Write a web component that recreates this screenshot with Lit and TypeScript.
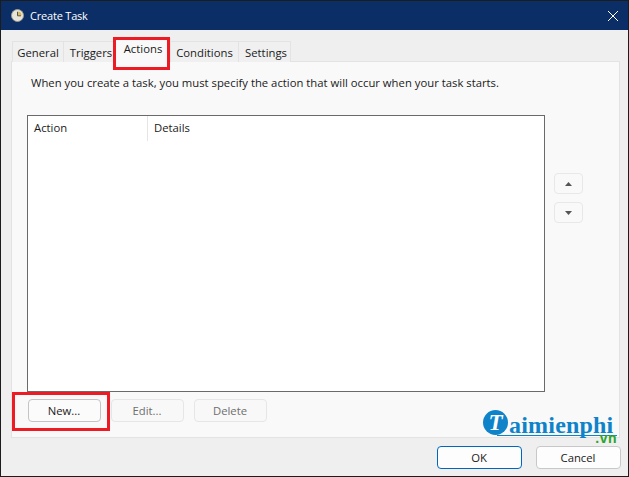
import { LitElement, html, css } from "lit";
import { customElement } from "lit/decorators.js";

@customElement("app-root")
export class AppRoot extends LitElement {
  static styles = css`
    :host { display: block; width: 629px; height: 477px; font-family: "Open Sans", "Noto Sans", sans-serif; font-size: 11.3px; color: #1a1a1a; }
    * { box-sizing: border-box; }
    .win { position: relative; width: 629px; height: 477px; background: #efefef; border: 1px solid #1c1c1c; display: flex; flex-direction: column; overflow: hidden; }
    .title { height: 29px; flex: none; background: #0b2e66; color: #fff; display: flex; align-items: center; padding: 0 9px 0 10px; gap: 6px; font-size: 11px; letter-spacing: -0.2px; }
    .title .t { flex: 1; }
    .title svg { display: block; }
    .body { flex: 1; display: flex; flex-direction: column; padding: 11px 7px 0 10px; }
    .tabs { display: flex; height: 20px; padding-left: 1px; flex: none; position: relative; z-index: 1; }
    .tab { height: 21px; border: 1px solid #e3e3e3; border-bottom: none; margin-right: -1px; background: #f0f0f0; display: flex; align-items: center; justify-content: center; flex: none; }
    .t1 { width: 52px; }
    .t2 { width: 53px; padding-left: 3px; }
    .t3 { width: 56px; height: 24px; margin-top: -3px; background: #f9f9f9; padding-bottom: 4px; position: relative; z-index: 2; }
    .t4 { width: 69px; }
    .t5 { width: 53px; padding-left: 3px; }
    .panel { height: 377px; flex: none; width: 609px; background: #f9f9f9; border: 1px solid #e3e3e3; display: flex; flex-direction: column; padding: 13px 0 0 15px; }
    .desc { height: 17px; padding-left: 4px; line-height: 16px; white-space: nowrap; }
    .mid { display: flex; margin-top: 23px; height: 277px; flex: none; }
    .list { width: 518px; height: 277px; background: #fff; border: 1px solid #6a6a6a; flex: none; }
    .head { display: flex; height: 25px; }
    .col { display: flex; align-items: center; padding: 0 0 2px 6px; border-right: 1px solid #e5e5e5; }
    .col.a { width: 120px; }
    .col.b { border: none; }
    .move { display: flex; flex-direction: column; gap: 8px; margin-left: 9px; padding-top: 58px; }
    .mv { width: 29px; height: 21px; border: 1px solid #e8e8e8; border-radius: 4px; background: #f9f9f9; display: flex; align-items: center; justify-content: center; }
    .acts { display: flex; gap: 10px; margin-top: 7px; padding-left: 1px; }
    .btn { width: 73px; height: 23px; border: 1px solid #e6e6e6; border-radius: 4px; background: #f8f8f8; color: #6e6e6e; display: flex; align-items: center; justify-content: center; padding-right: 1px; }
    .btn.en { background: #fbfbfb; color: #1a1a1a; border-color: #c4c4c4; }
    .foot { display: flex; justify-content: flex-end; gap: 14px; margin-top: 8px; }
    .foot .btn { width: 85px; color: #1a1a1a; background: #fdfdfd; }
    .foot .btn.def { border-color: #0067c0; }
    .foot .btn.can { border-color: #c8c8c8; }
    .hl { position: absolute; z-index: 5; border: 3px solid #ed1c24; pointer-events: none; }
    .hl.one { left: 112px; top: 36px; width: 57px; height: 33px; }
    .hl.two { left: 11px; top: 391px; width: 98px; height: 39px; }
    .mark { position: absolute; z-index: 6; left: 482px; top: 409px; width: 136px; height: 54px; pointer-events: none; }
    .dot { position: absolute; left: 0; top: 0; width: 25px; height: 25px; border-radius: 50%; background: #0f83c9; color: #fff; display: flex; align-items: center; justify-content: center; font: italic bold 23px "Liberation Serif", serif; }
    .word { position: absolute; left: 26px; top: 8px; font: bold 24px/14px "Liberation Serif", serif; color: #0f83c9; letter-spacing: 0.2px; white-space: nowrap; }
    .rule { position: absolute; left: 14px; top: 25px; width: 120px; height: 1px; background: #0f83c9; }
    .vn { position: absolute; right: 2px; top: 23px; font: bold 14px/10px "Liberation Sans", sans-serif; color: #2aa52a; letter-spacing: 0.5px; }
  `;

  render() {
    return html`
      <div class="win">
        <div class="title">
          <svg width="13" height="13" viewBox="0 0 13 13">
            <circle cx="6.5" cy="6.5" r="6" fill="#e8e4d8" stroke="#9a9a90" stroke-width="1"/>
            <path d="M6.5 6.5V2.4A4.1 4.1 0 0 1 10.6 6.5Z" fill="#d9b95e"/>
            <path d="M6.5 2.8V6.8H10" fill="none" stroke="#55554f" stroke-width="1"/>
          </svg>
          <span class="t">Create Task</span>
          <svg width="12" height="12" viewBox="0 0 12 12">
            <path d="M1 1L11 11M11 1L1 11" stroke="#fff" stroke-width="1" fill="none"/>
          </svg>
        </div>
        <div class="body">
          <div class="tabs">
            <div class="tab t1">General</div>
            <div class="tab t2">Triggers</div>
            <div class="tab t3">Actions</div>
            <div class="tab t4">Conditions</div>
            <div class="tab t5">Settings</div>
          </div>
          <div class="panel">
            <div class="desc">When you create a task, you must specify the action that will occur when your task starts.</div>
            <div class="mid">
              <div class="list">
                <div class="head">
                  <div class="col a">Action</div>
                  <div class="col b">Details</div>
                </div>
              </div>
              <div class="move">
                <div class="mv"><svg width="7" height="4" viewBox="0 0 7 4"><path d="M3.5 0L7 4H0Z" fill="#555"/></svg></div>
                <div class="mv"><svg width="7" height="4" viewBox="0 0 7 4"><path d="M0 0H7L3.5 4Z" fill="#555"/></svg></div>
              </div>
            </div>
            <div class="acts">
              <div class="btn en">New...</div>
              <div class="btn">Edit...</div>
              <div class="btn">Delete</div>
            </div>
          </div>
          <div class="foot">
            <div class="btn def">OK</div>
            <div class="btn can">Cancel</div>
          </div>
        </div>
        <div class="hl one"></div>
        <div class="hl two"></div>
        <div class="mark">
          <div class="dot">T</div>
          <div class="word">aimienphi</div>
          <div class="rule"></div>
          <div class="vn">.vn</div>
        </div>
      </div>
    `;
  }
}
